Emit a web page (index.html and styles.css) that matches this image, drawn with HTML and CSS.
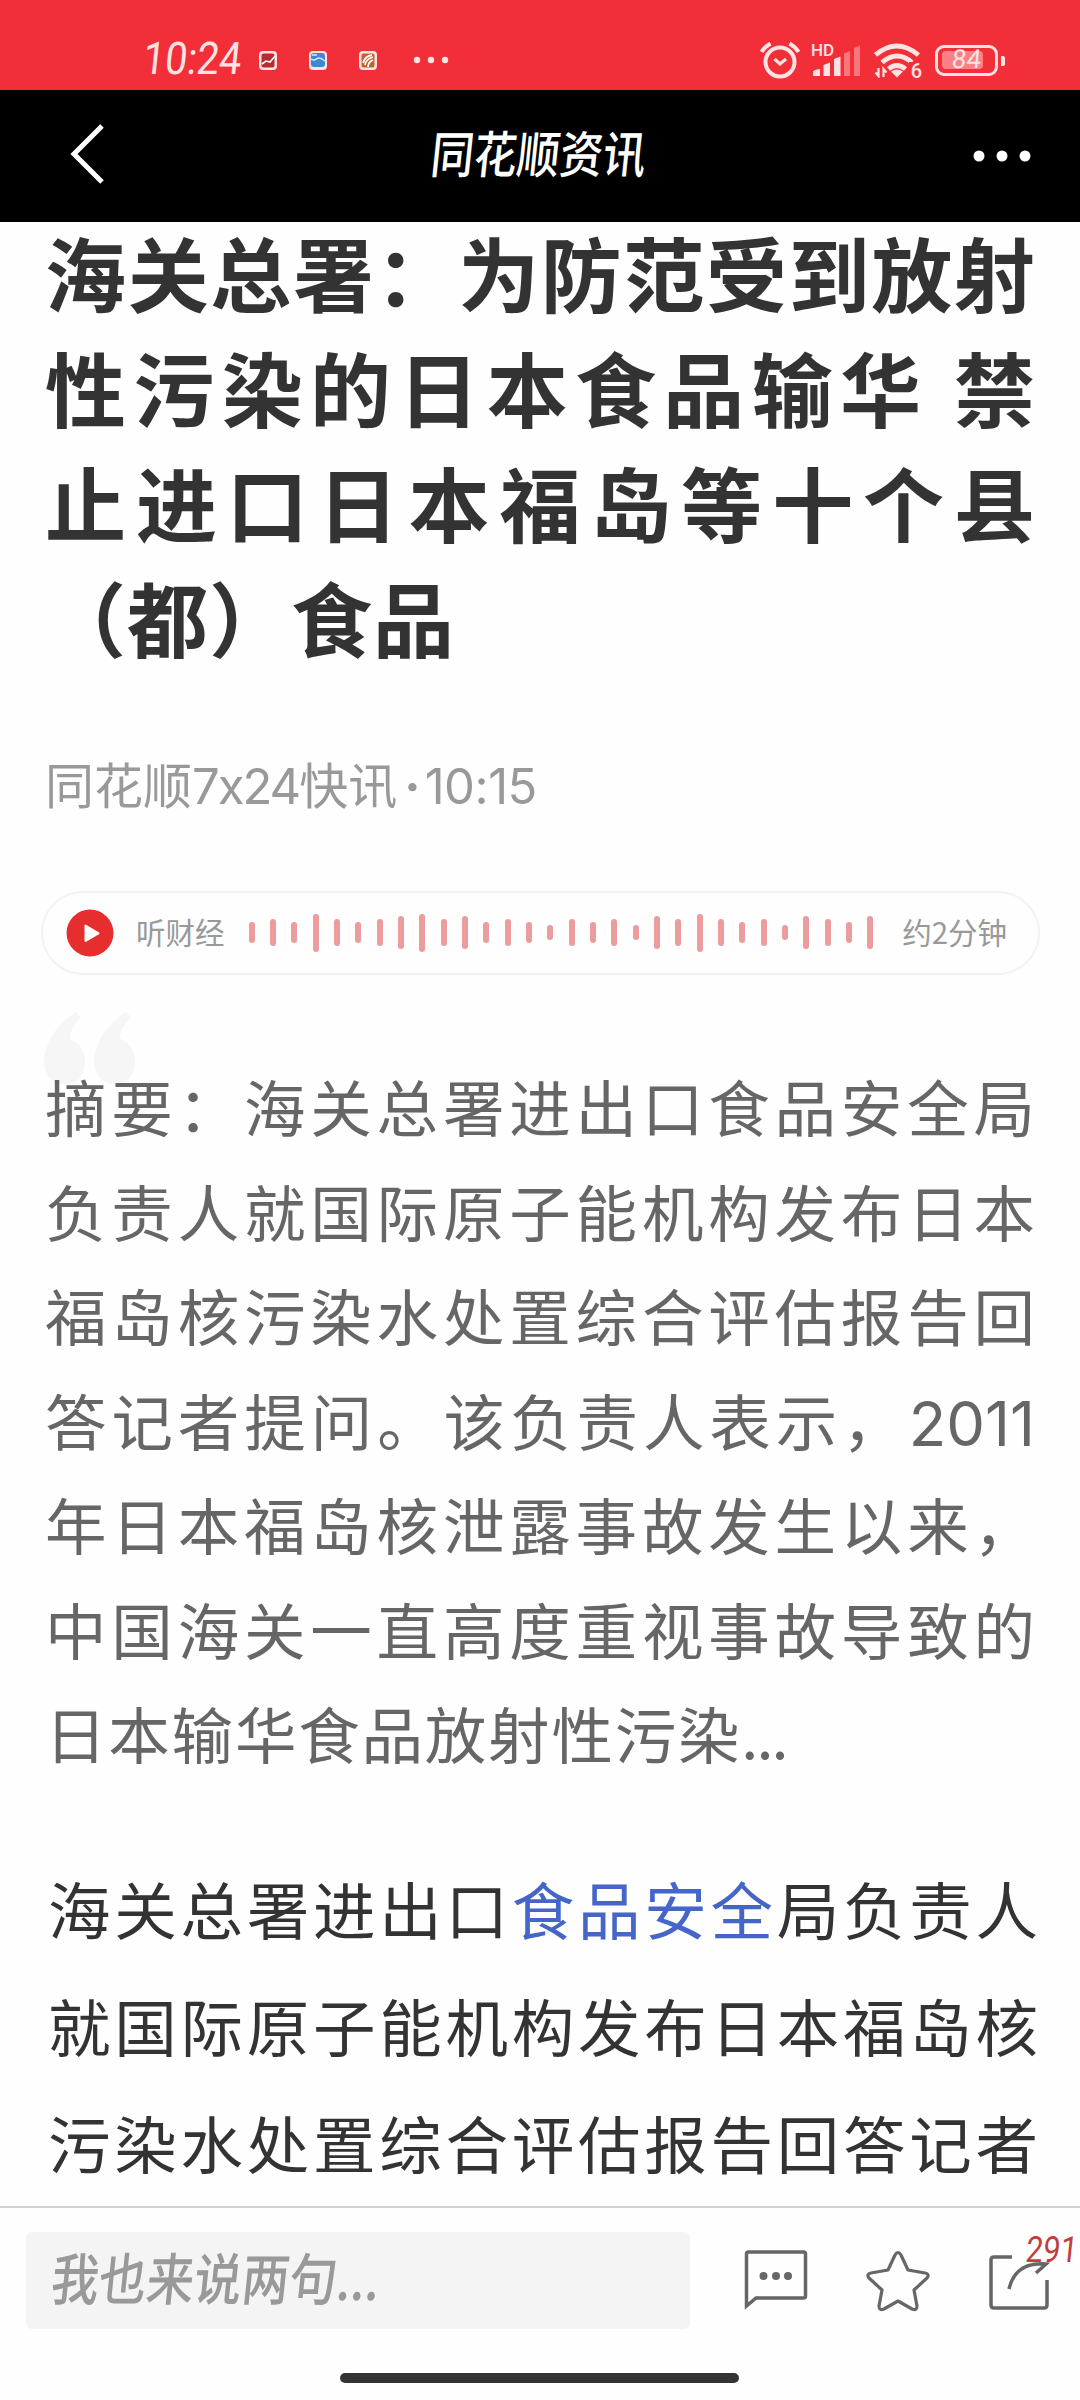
FILE: index.html
```html
<!DOCTYPE html>
<html lang="zh-CN">
<head>
    <meta charset="UTF-8">
    <title>同花顺资讯</title>
    <link rel="stylesheet" href="styles.css">
</head>
<body>
    <div class="status-bar">
        <span class="clock">10:24</span>
        <div class="notifications">
            <svg width="18" height="19" viewBox="0 0 18 19">
                <rect width="18" height="19" rx="4" fill="#ffe3e3"/>
                <rect x="2.5" y="2.5" width="13" height="14" rx="2" fill="#b92b30"/>
                <path d="M3 13l4-3 4 1 5-6" fill="none" stroke="#fff" stroke-width="1.6"/>
            </svg>
            <svg width="18" height="19" viewBox="0 0 18 19">
                <rect width="18" height="19" rx="4" fill="#ffe3e3"/>
                <rect x="2" y="2" width="14" height="14" rx="3" fill="#3f86d4"/>
                <path d="M2 8c4 3 5-1 8-1s4 2 6 3M3 4h5" fill="none" stroke="#d3e7ff" stroke-width="1.5"/>
            </svg>
            <svg width="18" height="19" viewBox="0 0 18 19">
                <rect width="18" height="19" rx="4" fill="#ffe3e3"/>
                <rect x="2.5" y="2.5" width="13" height="14" rx="2" fill="#c4612b"/>
                <path d="M4 12q2-7 9-8M6 14q1-6 8-8M9 16q0-5 5-7" fill="none" stroke="#fff" stroke-width="1.8"/>
            </svg>
            <svg class="more" width="36" height="8" viewBox="0 0 36 8" fill="#ffe3e3">
                <circle cx="4" cy="4" r="3.2"/>
                <circle cx="18" cy="4" r="3.2"/>
                <circle cx="32" cy="4" r="3.2"/>
            </svg>
        </div>
        <div class="system">
            <svg width="40" height="38" viewBox="0 0 40 38" fill="none" stroke="#ffe3e3">
                <circle cx="20" cy="21" r="14.5" stroke-width="4"/>
                <path d="M14.500 18l5.500 5 6-5" stroke-width="3.200"/>
                <path d="M1.500 11q3-5 9-8.500M38.500 11q-3-5-9-8.500" stroke-width="4"/>
            </svg>
            <div class="signal">
                <span class="hd">HD</span>
                <svg width="50" height="34" viewBox="0 0 50 34" fill="#ffe3e3">
                    <path d="M2 33v-4q0-2 7-3v7zM12.500 33V22l6.500-2.500V33zM23 33V16l6.500-2.500V33z"/>
                    <path opacity=".4" d="M33 33V10.500L39 8v25zM43 33V5l6-2.500V33z"/>
                </svg>
            </div>
            <div class="wifi">
                <svg width="48" height="36" viewBox="0 0 48 36" fill="none" stroke="#ffe3e3" stroke-width="4.800">
                    <path d="M1.500 13q21-18 43 0M8 20.500q15-13 30 0M14.500 27q8.500-7 17 0"/>
                    <path d="M17 29.500q6-4 12 0l-6 6z" fill="#ffe3e3" stroke="none"/>
                    <path d="M4.500 26v8l-3-3.500M9.500 35v-8l3 3.500" stroke-width="2.200"/>
                </svg>
                <span class="wifi-gen">6</span>
            </div>
            <div class="battery"><i></i><span>84</span></div>
        </div>
    </div>

    <div class="nav-bar">
        <svg width="36" height="62" viewBox="0 0 36 62" fill="none" stroke="#fff" stroke-width="5">
            <path d="M33 3L5 31l28 28"/>
        </svg>
        <h2>同花顺资讯</h2>
        <svg class="nav-more" width="60" height="14" viewBox="0 0 60 14" fill="#fff">
            <circle cx="7" cy="7" r="5.500"/>
            <circle cx="30" cy="7" r="5.500"/>
            <circle cx="53" cy="7" r="5.500"/>
        </svg>
    </div>

    <div class="article">
        <h1>
            <span class="line">海关总署：为防范受到放射</span>
            <span class="line">性污染的日本食品输华 禁</span>
            <span class="line">止进口日本福岛等十个县</span>
            <span class="line last">（都）食品</span>
        </h1>
        <p class="meta">同花顺<span class="num">7x24</span>快讯<b class="num">·</b><span class="num time">10:15</span></p>

        <div class="audio">
            <svg class="play" width="48" height="48" viewBox="0 0 48 48">
                <circle cx="24" cy="24" r="23.500" fill="#e62e2e"/>
                <path d="M19.500 16.500v15.500l13-7.700z" fill="#fff" stroke="#fff" stroke-width="2" stroke-linejoin="round"/>
            </svg>
            <span class="audio-name">听财经</span>
            <div class="wave" id="wave"></div>
            <span class="audio-time">约2分钟</span>
        </div>

        <div class="summary">
            <svg class="quote" width="91" height="72" viewBox="0 0 91 72" fill="#f6f6f6">
                <path id="mark" d="M32 0l5 5Q25 18 26 27 41 33 41 50 40 72 20 72 0 70 0 48 3 19 32 0z"/>
                <use href="#mark" x="50"/>
            </svg>
            <span class="line">摘要：海关总署进出口食品安全局</span>
            <span class="line">负责人就国际原子能机构发布日本</span>
            <span class="line">福岛核污染水处置综合评估报告回</span>
            <span class="line">答记者提问。该负责人表示，<span class="num">2011</span></span>
            <span class="line">年日本福岛核泄露事故发生以来，</span>
            <span class="line">中国海关一直高度重视事故导致的</span>
            <span class="line last">日本输华食品放射性污染<span class="dots">...</span></span>
        </div>

        <div class="content">
            <span class="line">海关总署进出口<a>食品安全</a>局负责人</span>
            <span class="line">就国际原子能机构发布日本福岛核</span>
            <span class="line">污染水处置综合评估报告回答记者</span>
        </div>
    </div>

    <div class="toolbar">
        <div class="comment-input"><span>我也来说两句...</span></div>
        <svg class="icon-comment" width="64" height="60" viewBox="0 0 64 60" fill="none" stroke="#666" stroke-width="3.500">
            <path d="M2.500 56V4q0-2 2-2h55q2 0 2 2v42q0 2-2 2H12z" stroke-linejoin="miter"/>
            <g fill="#666" stroke="none">
                <circle cx="19.500" cy="26" r="4"/>
                <circle cx="32" cy="26" r="4"/>
                <circle cx="44" cy="26" r="4"/>
            </g>
        </svg>
        <svg class="icon-star" width="64" height="62" viewBox="0 0 64 62" fill="none" stroke="#666" stroke-width="3.200" stroke-linejoin="round">
            <path d="M29 5q3-5 6 0l7 15 17 3q5 1 2 5L48 40l3 16q0 5-5 3l-14-8-14 8q-5 2-5-3l3-16L3 28q-3-4 2-5l17-3z"/>
        </svg>
        <div class="share">
            <svg width="62" height="58" viewBox="0 0 62 58" fill="none" stroke="#666" stroke-width="3.500">
                <path d="M24 5H6Q3 5 3 8v45q0 3 3 3h50q3 0 3-3V28"/>
                <path d="M21 37Q27 10 58 12L48 21"/>
            </svg>
            <span class="badge">291</span>
        </div>
        <div class="home-indicator"></div>
    </div>

    <script>
        // Bar heights of the audio waveform
        const bars = [21, 27, 21, 38, 27, 21, 27, 33, 38, 27, 33, 21, 27, 21, 15,
            27, 21, 27, 15, 33, 27, 38, 27, 21, 27, 15, 33, 27, 21, 33];
        document.getElementById("wave").innerHTML =
            bars.map(h => `<i style="height: ${h}px"></i>`).join("");
    </script>
</body>
</html>
```
FILE: styles.css
```css
* {
    box-sizing: border-box;
}

body {
    margin: 0;
    height: 2400px;
    display: flex;
    flex-direction: column;
    overflow: hidden;
    background-color: #fefefe;
    font-family: "Noto Sans CJK SC", sans-serif;
}

svg {
    display: block;
    flex: none;
}

/* system status bar */
.status-bar {
    height: 90px;
    flex: none;
    display: flex;
    align-items: center;
    padding: 30px 76px 0 143px;
    background-color: #f22f38;
    color: #ffe3e3;
}

.clock {
    width: 116px;
    font-family: Roboto, sans-serif;
    font-size: 45px;
    line-height: 56px;
    font-weight: 400;
    white-space: nowrap;
    transform: translateY(-1px) skewX(-6deg) scaleX(0.88);
    transform-origin: left center;
}

.notifications {
    display: flex;
    align-items: center;
    gap: 32px;
}

.notifications .more {
    margin-left: 4px;
}

.system {
    display: flex;
    align-items: center;
    margin-left: auto;
}

.signal {
    position: relative;
    margin-left: 11px;
}

.hd {
    position: absolute;
    left: 0;
    top: -1px;
    font: 500 17px/16px Roboto, sans-serif;
}

.wifi {
    position: relative;
    margin-left: 13px;
}

.wifi-gen {
    position: absolute;
    right: 0;
    bottom: -2px;
    padding-left: 2px;
    background-color: #f22f38;
    font: 500 20px/18px Roboto, sans-serif;
}

.battery {
    position: relative;
    width: 63px;
    height: 31px;
    margin: 0 6px 0 13px;
    border: 3px solid #ffe3e3;
    border-radius: 9px;
}

.battery::after {
    content: "";
    position: absolute;
    right: -10px;
    top: 8px;
    width: 4px;
    height: 10px;
    border-radius: 0 2px 2px 0;
    background-color: #ffe3e3;
}

.battery i {
    position: absolute;
    left: 4px;
    top: 3px;
    width: 41px;
    height: 18px;
    border-radius: 4px;
    background-color: #fa8086;
}

.battery span {
    position: absolute;
    left: 14px;
    top: -1px;
    font: 400 26px/24px Roboto, sans-serif;
    transform: skewX(-6deg);
}

/* title bar */
.nav-bar {
    height: 132px;
    flex: none;
    display: flex;
    align-items: center;
    justify-content: space-between;
    padding: 0 48px 4px 69px;
    background-color: #000;
    color: #fff;
}

.nav-bar h2 {
    margin: -6px 0 0;
    font-size: 50px;
    line-height: 60px;
    font-weight: 500;
    white-space: nowrap;
    transform: skewX(-6deg) scaleX(0.86);
}

.nav-more {
    margin-top: 3px;
}

/* article */
.article {
    flex: 1;
    min-height: 0;
    padding: 0 45px;
}

.line {
    display: block;
    white-space: nowrap;
    text-align: justify;
    text-align-last: justify;
    text-justify: inter-character;
}

.line.last {
    text-align-last: left;
}

h1 {
    margin: -9px 0 0;
    font-size: 81px;
    line-height: 115px;
    font-weight: 700;
    color: #333;
}

h1 .last {
    letter-spacing: 1px;
}

.num {
    font-family: Inter, sans-serif;
    line-height: 1;
}

.meta {
    margin: 74px 0 0;
    font-size: 49px;
    line-height: 72px;
    color: #999;
}

.meta .num {
    font-size: 49px;
    letter-spacing: -2px;
}

.meta b.num {
    margin: 0 4px 0 7px;
    letter-spacing: 0;
}

.meta .time {
    letter-spacing: -0.5px;
}

.audio {
    display: flex;
    align-items: center;
    width: 999px;
    height: 84px;
    margin: 72px 0 0 -4px;
    padding: 0 31px 0 23px;
    border: 2px solid #f3f3f3;
    border-radius: 42px;
    font-size: 29.500px;
    color: #999;
}

.audio-name,
.audio-time {
    margin-top: -4px;
}

.audio-name {
    margin-left: 22px;
}

.wave {
    display: flex;
    align-items: center;
    justify-content: space-between;
    width: 625px;
    margin: -1px auto 0 24px;
}

.wave i {
    width: 6px;
    border-radius: 3px;
    background-color: #eb9c9c;
}

.summary {
    position: relative;
    margin-top: 79px;
    font-size: 61.5px;
    line-height: 104.5px;
    color: #666;
}

.summary .last {
    letter-spacing: 1.8px;
}

.summary .dots {
    letter-spacing: -2px;
}

.quote {
    position: absolute;
    left: -1px;
    top: -42px;
    z-index: -1;
}

.content {
    margin: 63px -3px 0 3px;
    font-size: 62.5px;
    line-height: 117.4px;
    color: #333;
}

.content a {
    color: #4565c8;
}

/* bottom toolbar */
.toolbar {
    position: relative;
    flex: none;
    display: flex;
    align-items: flex-start;
    height: 194px;
    padding: 24px 30px 0 26px;
    border-top: 2px solid #d0d0d0;
    background-color: #fefefe;
}

.comment-input {
    width: 664px;
    height: 97px;
    padding-left: 26px;
    border-radius: 6px;
    background-color: #f4f4f4;
}

.comment-input span {
    display: inline-block;
    font-size: 56px;
    line-height: 88px;
    font-weight: 500;
    color: #999;
    transform: skewX(-6deg) scaleX(0.85);
    transform-origin: left center;
}

.icon-comment {
    margin: 18px 0 0 54px;
}

.icon-star {
    margin: 18px 0 0 58px;
}

.share {
    position: relative;
    margin: 20px 0 0 58px;
}

.badge {
    position: absolute;
    left: 38px;
    top: -18px;
    font: 400 36px/32px Roboto, sans-serif;
    color: #c43c40;
    transform: skewX(-6deg) scaleX(0.85);
    transform-origin: left center;
}

.home-indicator {
    position: absolute;
    left: 340px;
    bottom: 17px;
    width: 399px;
    height: 10px;
    border-radius: 5px;
    background-color: #333;
}
```
